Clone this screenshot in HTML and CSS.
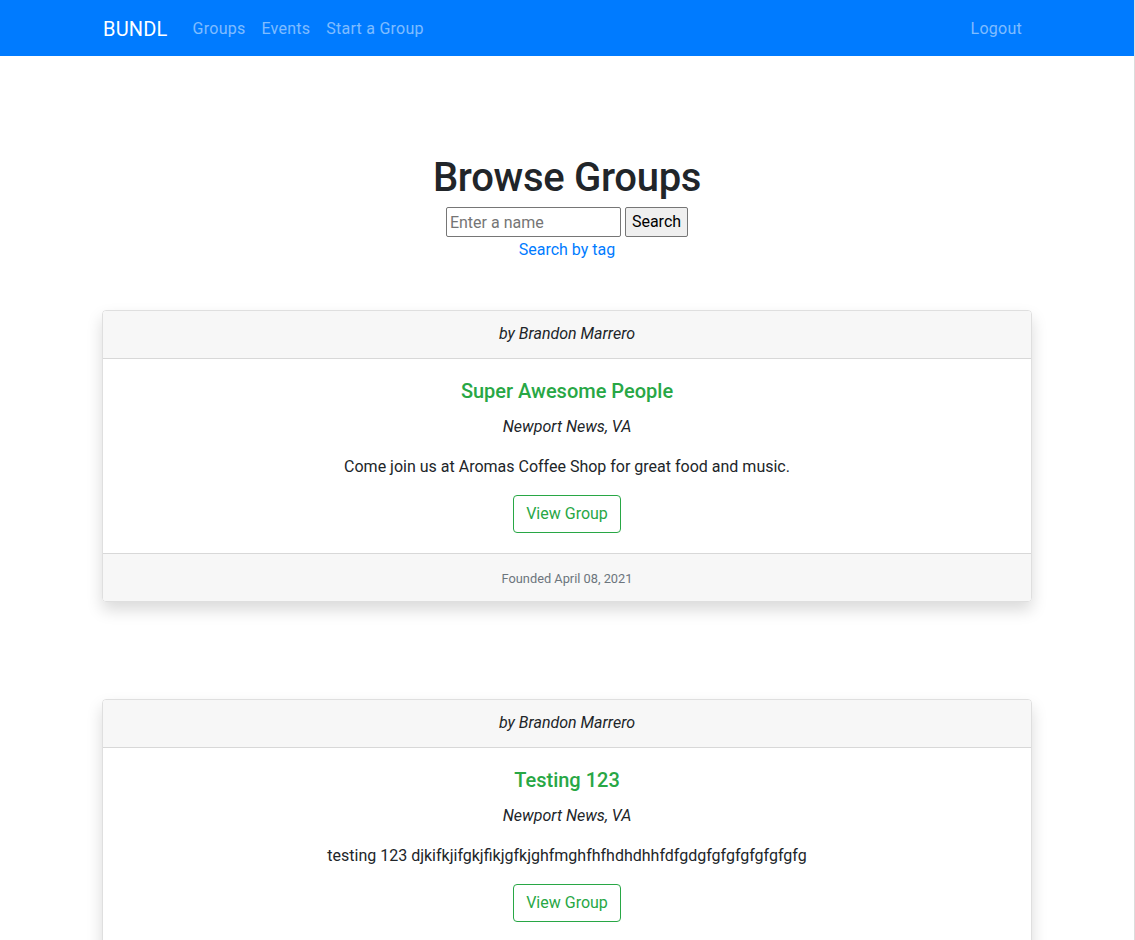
FILE: index.html
```html
<!DOCTYPE html>
<html lang="en">
<head>
<meta charset="utf-8">
<title>BUNDL - Browse Groups</title>
<link rel="stylesheet" href="styles.css">
</head>
<body>
<div class="page">
  <nav class="navbar">
    <div class="nav-inner">
      <a class="brand" href="#">BUNDL</a>
      <ul class="nav-links">
        <li><a href="#">Groups</a></li>
        <li><a href="#">Events</a></li>
        <li><a href="#">Start a Group</a></li>
      </ul>
      <a class="nav-link logout" href="#">Logout</a>
    </div>
  </nav>

  <main class="container">
    <section class="browse">
      <h1 class="title">Browse Groups</h1>
      <form class="search-form">
        <input class="search-input" type="text" placeholder="Enter a name">
        <button class="search-btn" type="button">Search</button>
      </form>
      <a class="tag-link" href="#">Search by tag</a>
    </section>

    <article class="card">
      <div class="card-header">by Brandon Marrero</div>
      <div class="card-body">
        <h5 class="card-title">Super Awesome People</h5>
        <p class="location">Newport News, VA</p>
        <p class="desc">Come join us at Aromas Coffee Shop for great food and music.</p>
        <a class="btn-outline" href="#">View Group</a>
      </div>
      <div class="card-footer"><small>Founded April 08, 2021</small></div>
    </article>

    <article class="card">
      <div class="card-header">by Brandon Marrero</div>
      <div class="card-body">
        <h5 class="card-title">Testing 123</h5>
        <p class="location">Newport News, VA</p>
        <p class="desc">testing 123 djkifkjifgkjfikjgfkjghfmghfhfhdhdhhfdfgdgfgfgfgfgfgfgfg</p>
        <a class="btn-outline" href="#">View Group</a>
      </div>
      <div class="card-footer"><small>Founded April 08, 2021</small></div>
    </article>
  </main>
</div>
</body>
</html>
```

FILE: styles.css
```css
* { box-sizing: border-box; }

html, body {
  margin: 0;
  padding: 0;
}

body {
  font-family: Roboto, Inter, "Noto Sans", "Liberation Sans", sans-serif;
  font-size: 16px;
  line-height: 1.5;
  color: #212529;
  background: #fff;
  overflow: hidden;
}

.page {
  width: 1135px;
  height: 940px;
  overflow: hidden;
  border-right: 1px solid #dcdcdc;
}

a { text-decoration: none; }

.navbar {
  background: #007bff;
  height: 56px;
  padding: 9px 16px 7px;
}

.nav-inner {
  max-width: 960px;
  margin: 0 auto;
  padding: 0 15px 0 16px;
  height: 40px;
  display: flex;
  align-items: center;
}

.brand {
  color: #fff;
  font-size: 20px;
  line-height: 30px;
  margin-right: 17px;
  letter-spacing: 0.2px;
}

.nav-links {
  list-style: none;
  margin: 0;
  padding: 0;
  display: flex;
  flex: 1;
}

.nav-links a,
.nav-link {
  display: block;
  padding: 8px;
  color: rgba(255, 255, 255, 0.5);
  line-height: 24px;
  letter-spacing: 0.25px;
}

.logout {
  margin-right: 2px;
}

.container {
  max-width: 960px;
  margin: 0 auto;
  padding: 0 15px;
}

.browse {
  text-align: center;
  padding-top: 98px;
  margin-bottom: 48px;
}

.title {
  font-size: 40px;
  font-weight: 500;
  line-height: 48px;
  margin: 0 0 5px;
  letter-spacing: -0.3px;
}

.search-form {
  display: flex;
  justify-content: center;
  gap: 4px;
  height: 30px;
}

.search-input {
  width: 175px;
  height: 30px;
  font: inherit;
  font-size: 16px;
  padding: 1px 3px;
  border: 1px solid #767676;
  border-radius: 2px;
  color: #212529;
}

.search-input::placeholder { color: #757575; }

.search-btn {
  height: 30px;
  font: inherit;
  font-size: 16px;
  padding: 0 6px;
  border: 1px solid #767676;
  border-radius: 2px;
  background: #efefef;
  color: #000;
}

.tag-link {
  display: inline-block;
  color: #007bff;
  line-height: 24px;
  margin-top: 1px;
}

.card {
  border: 1px solid rgba(0, 0, 0, 0.125);
  border-radius: 4px;
  box-shadow: 0 8px 16px rgba(0, 0, 0, 0.15);
  text-align: center;
  margin-bottom: 97px;
  overflow: hidden;
}

.card-header,
.card-footer {
  background: #f7f7f7;
  line-height: 24px;
}

.card-header {
  font-style: italic;
  padding: 11px 20px 12px;
  border-bottom: 1px solid rgba(0, 0, 0, 0.125);
}

.card-footer {
  padding: 12px 20px 11px;
  border-top: 1px solid rgba(0, 0, 0, 0.125);
  height: 48px;
}

.card-footer small {
  font-size: 12.8px;
  line-height: 1;
  color: #6c757d;
}

.card-body {
  padding: 20px;
  height: 194px;
}

.card-title {
  font-size: 20px;
  font-weight: 500;
  line-height: 24px;
  color: #28a745;
  margin: 0 0 12px;
}

.location {
  font-style: italic;
  margin: 0 0 16px;
}

.desc {
  margin: 0 0 16px;
}

.btn-outline {
  display: inline-block;
  color: #28a745;
  border: 1px solid #28a745;
  border-radius: 4px;
  padding: 6px 12px;
  line-height: 24px;
}
```
